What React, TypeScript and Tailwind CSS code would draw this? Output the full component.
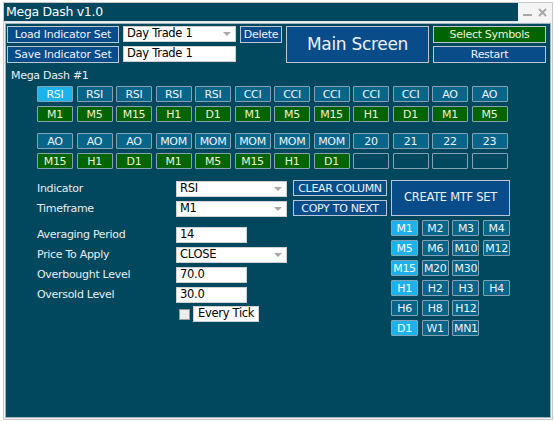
import React from "react";

const blueBtn =
  "flex items-center justify-center bg-[#084c8a] border border-[#b9c6d0] text-[#eef2f6] leading-none";
const indBtn =
  "flex items-center justify-center bg-[#07658a] border border-[#86a2b2] text-[#eef4f8] text-[11px] leading-none rounded-[1px]";
const selBtn =
  "flex items-center justify-center bg-[#1cb2ec] border border-[#86a2b2] text-[#f4fbff] text-[11px] leading-none rounded-[1px]";
const greenBtn =
  "flex items-center justify-center bg-[#006400] border border-[#86a2b2] text-[#eef2d8] text-[11px] leading-none rounded-[1px]";
const emptyBtn =
  "flex items-center justify-center bg-[#01475e] border border-[#86a2b2] rounded-[1px]";

const row1 = ["RSI", "RSI", "RSI", "RSI", "RSI", "CCI", "CCI", "CCI", "CCI", "CCI", "AO", "AO"];
const row2 = ["M1", "M5", "M15", "H1", "D1", "M1", "M5", "M15", "H1", "D1", "M1", "M5"];
const row3 = ["AO", "AO", "AO", "MOM", "MOM", "MOM", "MOM", "MOM", "20", "21", "22", "23"];
const row4 = ["M15", "H1", "D1", "M1", "M5", "M15", "H1", "D1", "", "", "", ""];

const mtf: [string, boolean][][] = [
  [["M1", true], ["M2", false], ["M3", false], ["M4", false]],
  [["M5", true], ["M6", false], ["M10", false], ["M12", false]],
  [["M15", true], ["M20", false], ["M30", false], ["", false]],
  [["H1", true], ["H2", false], ["H3", false], ["H4", false]],
  [["H6", false], ["H8", false], ["H12", false], ["", false]],
  [["D1", true], ["W1", false], ["MN1", false], ["", false]],
];

function Arrow() {
  return (
    <svg width="8" height="5" viewBox="0 0 8 5" className="mr-[4px]">
      <path d="M0 0 L8 0 L4 4 Z" fill="#a8a8a8" />
    </svg>
  );
}

function Combo({ value, w }: { value: string; w: string }) {
  return (
    <div className={`${w} h-[16px] bg-white border border-[#d0d0d0] flex items-center justify-between text-black text-[11.5px] leading-none pl-[3px]`}>
      <span>{value}</span>
      <Arrow />
    </div>
  );
}

function Input({ value, w }: { value: string; w: string }) {
  return (
    <div className={`${w} h-[16px] bg-white border border-[#d0d0d0] flex items-center text-black text-[11.5px] leading-none pl-[3px]`}>
      {value}
    </div>
  );
}

export default function App() {
  return (
    <div className="w-[554px] h-[421px] bg-white pt-[2px] pl-[3px] pr-[1px] pb-[1px] font-['DejaVu_Sans',sans-serif] tracking-[-0.3px]">
      <div className="w-full h-full flex flex-col border border-[#c8c8c8] bg-[#f0f0f0]">
        {/* title */}
        <div className="h-[19px] flex shrink-0">
          <div className="flex-1 bg-[#01475e] text-white text-[12.5px] leading-none flex items-center pl-[2px] border-b border-[#e0e0e0]">
            Mega Dash v1.0
          </div>
          <div className="w-[34px] bg-[#f4f4f4] flex items-center justify-end gap-[6px] pr-[5px] text-[#a0a0a0]">
            <div className="w-[9px] h-[2px] bg-[#a8a8a8] mt-[4px]" />
            <svg width="9" height="9" viewBox="0 0 9 9">
              <path d="M1 1 L8 8 M8 1 L1 8" stroke="#a8a8a8" strokeWidth="2" />
            </svg>
          </div>
        </div>
        {/* body */}
        <div className="flex-1 mx-[1px] mb-[1px] mt-[1px] bg-[#01475e] border border-[#9fb4bf] text-[#e8eef2] text-[11px] flex flex-col">
          {/* top controls */}
          <div className="grid grid-cols-[112px_113px_42px_143px_113px] grid-rows-[17px_17px] gap-x-[4px] gap-y-[3px] mt-[2px] ml-[1px]">
            <div className={`${blueBtn} text-[11px] tracking-[-0.2px]`}>Load Indicator Set</div>
            <Combo value="Day Trade 1" w="w-[113px]" />
            <div className={`${blueBtn} text-[11px]`}>Delete</div>
            <div className={`${blueBtn} row-span-2 text-[17px]`}>Main Screen</div>
            <div className="flex items-center justify-center bg-[#006400] border border-[#b9c6d0] text-[#eef2d8] text-[11px] leading-none">
              Select Symbols
            </div>
            <div className={`${blueBtn} text-[11px] tracking-[-0.2px]`}>Save Indicator Set</div>
            <Input value="Day Trade 1" w="w-[113px]" />
            <div />
            <div className={`${blueBtn} text-[11px]`}>Restart</div>
          </div>
          <div className="ml-[5px] mt-[4px] h-[16px] flex items-center text-[11px] leading-none">Mega Dash #1</div>
          {/* indicator grid */}
          <div className="ml-[31px] mt-[3px] grid grid-cols-[repeat(12,36px)] auto-rows-[16px] gap-x-[3.5px] gap-y-[4px]">
            {row1.map((t, i) => (
              <div key={"a" + i} className={i === 0 ? selBtn : indBtn}>{t}</div>
            ))}
            {row2.map((t, i) => (
              <div key={"b" + i} className={greenBtn}>{t}</div>
            ))}
          </div>
          <div className="ml-[31px] mt-[11px] grid grid-cols-[repeat(12,36px)] auto-rows-[16px] gap-x-[3.5px] gap-y-[4px]">
            {row3.map((t, i) => (
              <div key={"c" + i} className={indBtn}>{t}</div>
            ))}
            {row4.map((t, i) => (
              <div key={"d" + i} className={t ? greenBtn : emptyBtn}>{t}</div>
            ))}
          </div>
          {/* form */}
          <div className="flex mt-[11px] ml-[31px]">
            <div className="w-[251px] flex flex-col text-[11px]">
              <div className="flex items-center h-[16px] mt-[1px]">
                <div className="w-[139px]">Indicator</div>
                <Combo value="RSI" w="w-[111px]" />
              </div>
              <div className="flex items-center h-[16px] mt-[4px]">
                <div className="w-[139px]">Timeframe</div>
                <Combo value="M1" w="w-[111px]" />
              </div>
              <div className="flex items-center h-[16px] mt-[10px]">
                <div className="w-[139px]">Averaging Period</div>
                <Input value="14" w="w-[71px]" />
              </div>
              <div className="flex items-center h-[16px] mt-[4px]">
                <div className="w-[139px]">Price To Apply</div>
                <Combo value="CLOSE" w="w-[111px]" />
              </div>
              <div className="flex items-center h-[16px] mt-[4px]">
                <div className="w-[139px]">Overbought Level</div>
                <Input value="70.0" w="w-[71px]" />
              </div>
              <div className="flex items-center h-[16px] mt-[4px]">
                <div className="w-[139px]">Oversold Level</div>
                <Input value="30.0" w="w-[71px]" />
              </div>
              <div className="flex items-center h-[16px] mt-[3px] pl-[142px]">
                <div className="w-[11px] h-[11px] bg-[#ececec] border border-[#9a9a9a]" />
                <div className="ml-[3px] h-[16px] bg-white border border-[#d0d0d0] text-black text-[11.5px] leading-none flex items-center px-[4px]">
                  Every Tick
                </div>
              </div>
            </div>
            <div className="ml-[5px] flex flex-col gap-[4px]">
              <div className={`${blueBtn} w-[94px] h-[16px] text-[11px]`}>CLEAR COLUMN</div>
              <div className={`${blueBtn} w-[94px] h-[16px] text-[11px]`}>COPY TO NEXT</div>
            </div>
            <div className="ml-[4px] flex flex-col">
              <div className={`${blueBtn} w-[119px] h-[36px] text-[11.5px]`}>CREATE MTF SET</div>
              <div className="mt-[4px] grid grid-cols-[repeat(4,27px)] auto-rows-[16px] gap-x-[3.7px] gap-y-[4px]">
                {mtf.flat().map(([t, s], i) =>
                  t ? (
                    <div key={"m" + i} className={s ? selBtn : indBtn}>{t}</div>
                  ) : (
                    <div key={"m" + i} />
                  )
                )}
              </div>
            </div>
          </div>
        </div>
      </div>
    </div>
  );
}
